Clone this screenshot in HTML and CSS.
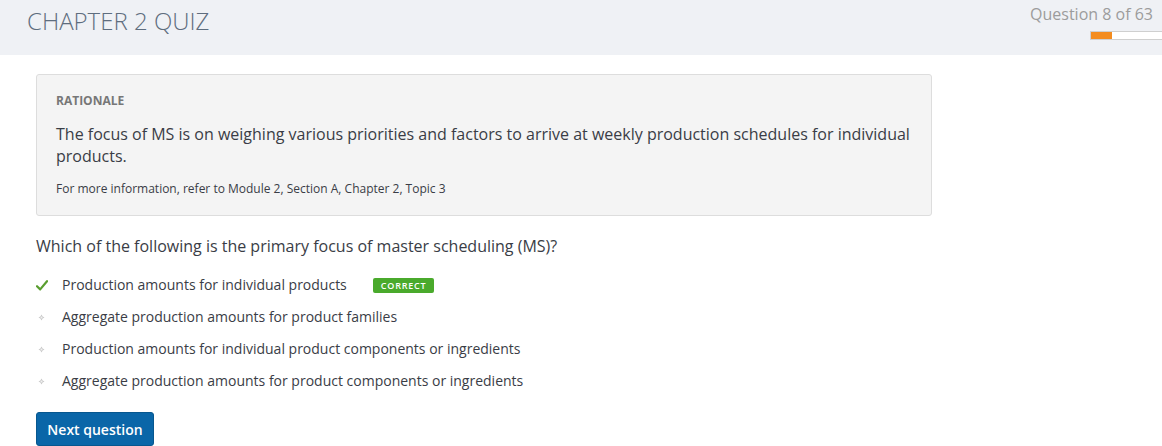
FILE: index.html
```html
<!DOCTYPE html>
<html>
<head>
<meta charset="utf-8">
<link rel="stylesheet" href="styles.css">
</head>
<body>
<header class="topbar">
  <h1 class="title">CHAPTER 2 QUIZ</h1>
  <div class="progress-wrap">
    <div class="progress-label">Question 8 of 63</div>
    <div class="progress-bar"><div class="progress-fill" style="width: 21px"></div></div>
  </div>
</header>
<main class="content">
  <section class="rationale">
    <div class="rationale-head">RATIONALE</div>
    <p class="rationale-text">The focus of MS is on weighing various priorities and factors to arrive at weekly production schedules for individual products.</p>
    <p class="rationale-ref">For more information, refer to Module 2, Section A, Chapter 2, Topic 3</p>
  </section>
  <p class="question">Which of the following is the primary focus of master scheduling (MS)?</p>
  <ul class="options">
    <li class="option">
      <span class="mark"><svg width="12" height="11" viewBox="0 0 12 11"><path d="M1 6.2 L4.2 9.4 L11 1.2" fill="none" stroke="#5a9e2f" stroke-width="2.2" stroke-linecap="round" stroke-linejoin="round"/></svg></span>
      <span class="opt-text">Production amounts for individual products</span>
      <span class="badge">CORRECT</span>
    </li>
    <li class="option">
      <span class="mark"><svg class="dot" width="7" height="7" viewBox="0 0 7 7"><path d="M3.5 0.5 L4.6 2.4 L6.5 3.5 L4.6 4.6 L3.5 6.5 L2.4 4.6 L0.5 3.5 L2.4 2.4 Z" fill="#c8c8c8"/><circle cx="3.5" cy="3.5" r="1" fill="#f2f2f2"/></svg></span>
      <span class="opt-text">Aggregate production amounts for product families</span>
    </li>
    <li class="option">
      <span class="mark"><svg class="dot" width="7" height="7" viewBox="0 0 7 7"><path d="M3.5 0.5 L4.6 2.4 L6.5 3.5 L4.6 4.6 L3.5 6.5 L2.4 4.6 L0.5 3.5 L2.4 2.4 Z" fill="#c8c8c8"/><circle cx="3.5" cy="3.5" r="1" fill="#f2f2f2"/></svg></span>
      <span class="opt-text">Production amounts for individual product components or ingredients</span>
    </li>
    <li class="option">
      <span class="mark"><svg class="dot" width="7" height="7" viewBox="0 0 7 7"><path d="M3.5 0.5 L4.6 2.4 L6.5 3.5 L4.6 4.6 L3.5 6.5 L2.4 4.6 L0.5 3.5 L2.4 2.4 Z" fill="#c8c8c8"/><circle cx="3.5" cy="3.5" r="1" fill="#f2f2f2"/></svg></span>
      <span class="opt-text">Aggregate production amounts for product components or ingredients</span>
    </li>
  </ul>
  <button class="next-btn">Next question</button>
</main>
</body>
</html>
```
FILE: styles.css
```css
html, body {
  margin: 0;
  padding: 0;
  background: #ffffff;
  font-family: "Open Sans", "Liberation Sans", sans-serif;
  color: #3a3d46;
}

.topbar {
  height: 55px;
  background: #eff1f5;
  display: flex;
  justify-content: space-between;
  align-items: flex-start;
  padding-left: 27px;
}

.title {
  margin: 0;
  padding-top: 6px;
  font-size: 24px;
  line-height: 30px;
  font-weight: 300;
  color: #5e6d7e;
}

.progress-wrap {
  display: flex;
  flex-direction: column;
  align-items: flex-end;
}

.progress-label {
  padding-top: 3px;
  padding-right: 9px;
  font-size: 16px;
  line-height: 22px;
  color: #9c9c9c;
}

.progress-bar {
  margin-top: 6px;
  width: 71px;
  height: 7px;
  background: #ffffff;
  border: 1px solid #cfcfcf;
  border-right: none;
}

.progress-fill {
  height: 7px;
  background: #f38c1f;
}

.content {
  padding: 19px 0 0 36px;
}

.rationale {
  width: 856px;
  background: #f4f4f4;
  border: 1px solid #dddddd;
  border-radius: 3px;
  padding: 17px 19px 17px 19px;
}

.rationale-head {
  font-size: 12px;
  line-height: 18px;
  font-weight: 700;
  color: #777777;
}

.rationale-text {
  margin: 13px 0 0 0;
  font-size: 16px;
  line-height: 22px;
  color: #3a3d46;
}

.rationale-ref {
  margin: 13px 0 0 0;
  font-size: 12px;
  line-height: 18px;
  color: #3a3d46;
}

.question {
  margin: 19px 0 0 0;
  font-size: 16px;
  line-height: 22px;
  color: #3a3d46;
}

.options {
  list-style: none;
  margin: 12px 0 0 0;
  padding: 0;
}

.option {
  display: flex;
  align-items: center;
  height: 32px;
  font-size: 14px;
}

.mark {
  width: 26px;
  display: flex;
  align-items: center;
}

.mark .dot {
  margin-left: 2px;
}

.opt-text {
  line-height: 20px;
}

.badge {
  margin-left: 26px;
  background: #4aaa2c;
  color: #ffffff;
  font-size: 9px;
  font-weight: 600;
  letter-spacing: 0.8px;
  line-height: 15px;
  height: 15px;
  padding: 0 7px 0 8px;
  border-radius: 2px;
}

.next-btn {
  margin-top: 15px;
  height: 34px;
  width: 118px;
  background: #0a66a8;
  color: #ffffff;
  border: 1px solid #07578f;
  border-radius: 3px;
  font-family: "Open Sans", "Liberation Sans", sans-serif;
  font-size: 14px;
  font-weight: 600;
  padding: 0;
  cursor: pointer;
}
```
